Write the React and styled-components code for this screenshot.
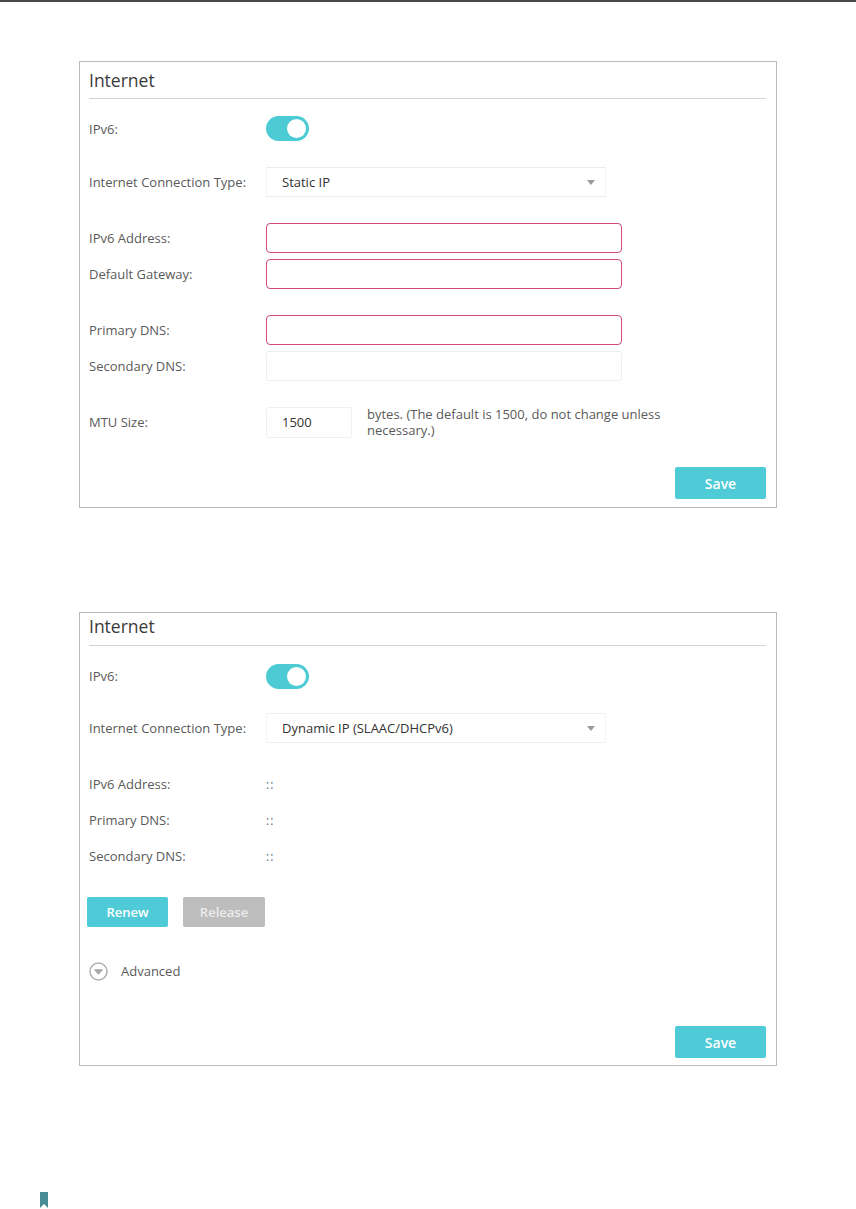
import React from "react";
import styled, { createGlobalStyle } from "styled-components";

const Global = createGlobalStyle`
  html, body { margin: 0; padding: 0; background: #fff; }
  body { font-family: "Open Sans", "DejaVu Sans", sans-serif; }
`;

const Page = styled.div`
  width: 856px;
  height: 1209px;
  overflow: hidden;
  border-top: 2px solid #4a4a4a;
  box-sizing: border-box;
  display: flex;
  flex-direction: column;
`;

const Panel = styled.section`
  margin: ${(p) => p.$top}px 0 0 79px;
  width: 698px;
  box-sizing: border-box;
  border: 1px solid #b9b9b9;
  padding: 0 10px ${(p) => p.$bottom}px 9px;
  display: flex;
  flex-direction: column;
`;

const Title = styled.h2`
  margin: 0;
  height: ${(p) => p.$h}px;
  box-sizing: border-box;
  padding-top: ${(p) => p.$pt}px;
  font-size: 17.5px;
  font-weight: 400;
  line-height: 22px;
  color: #3a3a3a;
  border-bottom: 1px solid #d4d4d4;
`;

const Row = styled.div`
  display: grid;
  grid-template-columns: 177px 1fr;
  align-items: center;
  height: ${(p) => p.$h}px;
  margin-top: ${(p) => p.$mt}px;
`;

const Label = styled.span`
  font-size: 13px;
  color: #5a5a5a;
`;

const Toggle = styled.span`
  width: 43px;
  height: 25px;
  border-radius: 13px;
  background: #4ccbd4;
  position: relative;
  display: block;
  &::after {
    content: "";
    position: absolute;
    right: 3px;
    top: 3px;
    width: 19px;
    height: 19px;
    border-radius: 50%;
    background: #fff;
  }
`;

const Select = styled.div`
  width: 340px;
  height: 30px;
  box-sizing: border-box;
  border: 1px solid #ececec;
  border-left-color: #f6f6f6;
  border-right-color: #f6f6f6;
  display: flex;
  align-items: center;
  justify-content: space-between;
  padding: 0 10px 0 15px;
  font-size: 13px;
  color: #333;
`;

const Arrow = styled.span`
  width: 0;
  height: 0;
  border-left: 4px solid transparent;
  border-right: 4px solid transparent;
  border-top: 5px solid #9a9a9a;
`;

const Input = styled.div`
  width: ${(p) => p.$w || 356}px;
  height: ${(p) => p.$h || 30}px;
  box-sizing: border-box;
  border: ${(p) => (p.$error ? "1.5px solid #d8497a" : "1px solid #f0f0f0")};
  border-radius: ${(p) => (p.$error ? 4 : 2)}px;
  display: flex;
  align-items: center;
  padding-left: 15px;
  font-size: 13px;
  color: #333;
`;

const MtuWrap = styled.div`
  display: flex;
  align-items: center;
  gap: 15px;
`;

const Hint = styled.span`
  font-size: 13px;
  line-height: 16px;
  color: #5a5a5a;
  width: 320px;
`;

const Value = styled.span`
  font-size: 12px;
  color: #666;
  letter-spacing: 1px;
`;

const Footer = styled.div`
  display: flex;
  justify-content: flex-end;
  margin-top: ${(p) => p.$mt}px;
`;

const Button = styled.button`
  width: ${(p) => p.$w}px;
  height: 32px;
  border: none;
  border-radius: 2px;
  background: ${(p) => (p.$gray ? "#bdbdbd" : "#4fcbd7")};
  color: ${(p) => (p.$gray ? "#ececec" : "#fff")};
  font-family: "Open Sans", "DejaVu Sans", sans-serif;
  font-size: ${(p) => p.$fs || 13}px;
  font-weight: 600;
  padding: 0;
`;

const ButtonRow = styled.div`
  display: flex;
  gap: 15px;
  height: 30px;
  margin-top: ${(p) => p.$mt}px;
  margin-left: -2px;
  & > button { height: 30px; }
`;

const Advanced = styled.div`
  display: flex;
  align-items: center;
  gap: 13px;
  height: 20px;
  margin-top: ${(p) => p.$mt}px;
  font-size: 13px;
  color: #5a5a5a;
`;

const Bookmark = styled.svg`
  margin: 126px 0 0 40px;
  display: block;
  flex: none;
`;

export default function App() {
  return (
    <>
      <Global />
      <Page>
        <Panel $top={59} $bottom={8}>
          <Title $h={37} $pt={7}>Internet</Title>
          <Row $h={25} $mt={17}>
            <Label>IPv6:</Label>
            <Toggle />
          </Row>
          <Row $h={30} $mt={26}>
            <Label>Internet Connection Type:</Label>
            <Select>
              <span>Static IP</span>
              <Arrow />
            </Select>
          </Row>
          <Row $h={30} $mt={26}>
            <Label>IPv6 Address:</Label>
            <Input $error />
          </Row>
          <Row $h={30} $mt={6}>
            <Label>Default Gateway:</Label>
            <Input $error />
          </Row>
          <Row $h={30} $mt={26}>
            <Label>Primary DNS:</Label>
            <Input $error />
          </Row>
          <Row $h={30} $mt={6}>
            <Label>Secondary DNS:</Label>
            <Input />
          </Row>
          <Row $h={31} $mt={25}>
            <Label>MTU Size:</Label>
            <MtuWrap>
              <Input $w={86} $h={31}>1500</Input>
              <Hint>bytes. (The default is 1500, do not change unless necessary.)</Hint>
            </MtuWrap>
          </Row>
          <Footer $mt={30}>
            <Button $w={91} $fs={14}>Save</Button>
          </Footer>
        </Panel>

        <Panel $top={104} $bottom={7}>
          <Title $h={33} $pt={2}>Internet</Title>
          <Row $h={26} $mt={17}>
            <Label>IPv6:</Label>
            <Toggle />
          </Row>
          <Row $h={30} $mt={24}>
            <Label>Internet Connection Type:</Label>
            <Select>
              <span>Dynamic IP (SLAAC/DHCPv6)</span>
              <Arrow />
            </Select>
          </Row>
          <Row $h={20} $mt={31}>
            <Label>IPv6 Address:</Label>
            <Value>::</Value>
          </Row>
          <Row $h={20} $mt={16}>
            <Label>Primary DNS:</Label>
            <Value>::</Value>
          </Row>
          <Row $h={20} $mt={16}>
            <Label>Secondary DNS:</Label>
            <Value>::</Value>
          </Row>
          <ButtonRow $mt={31}>
            <Button $w={81}>Renew</Button>
            <Button $w={82} $gray>Release</Button>
          </ButtonRow>
          <Advanced $mt={34}>
            <svg width="19" height="19" viewBox="0 0 19 19">
              <circle cx="9.5" cy="9.5" r="8.5" fill="none" stroke="#b0b0b0" strokeWidth="1.5" />
              <path d="M5.8 7.8 L9.5 11.8 L13.2 7.8 Z" fill="#a8a8a8" stroke="#a8a8a8" strokeWidth="1.2" strokeLinejoin="round" />
            </svg>
            <span>Advanced</span>
          </Advanced>
          <Footer $mt={45}>
            <Button $w={91} $fs={14}>Save</Button>
          </Footer>
        </Panel>

        <Bookmark width="8" height="17" viewBox="0 0 8 17">
          <path d="M0 0 H8 V16 L4 12 L0 16 Z" fill="#4a8c96" />
        </Bookmark>
      </Page>
    </>
  );
}
